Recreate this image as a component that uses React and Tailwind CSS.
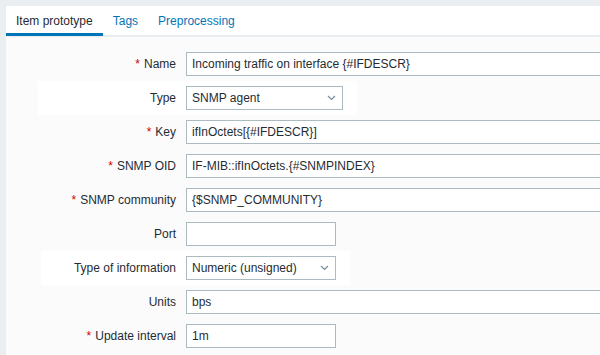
import React from "react";

const font = { fontFamily: '"Liberation Sans", Arial, sans-serif' };

function Chevron() {
  return (
    <svg width="9" height="6" viewBox="0 0 9 6" className="shrink-0">
      <path d="M1 1 L4.5 4.5 L8 1" fill="none" stroke="#768d99" strokeWidth="1.2" />
    </svg>
  );
}

function Label({ req, children, w = "w-[170px]" }) {
  return (
    <div className={`${w} shrink-0 text-right text-[12px] text-[#1f2c33] whitespace-nowrap`}>
      {req && <span className="text-[#d40000] mr-[4px]">*</span>}
      {children}
    </div>
  );
}

function TextInput({ value, w }) {
  return (
    <div className={`${w} shrink-0 h-[24px] border border-[#acbbc2] bg-white flex items-center px-[5px] text-[12px] text-[#1f2c33] whitespace-nowrap overflow-hidden`}>
      {value}
    </div>
  );
}

function Select({ value, w }) {
  return (
    <div className={`${w} shrink-0 h-[24px] border border-[#acbbc2] bg-white flex items-center justify-between pl-[5px] pr-[6px] text-[12px] text-[#1f2c33] whitespace-nowrap`}>
      <span>{value}</span>
      <Chevron />
    </div>
  );
}

function Row({ req, label, children }) {
  return (
    <div className="h-[34px] flex items-center gap-[10px]">
      <Label req={req}>{label}</Label>
      {children}
    </div>
  );
}

export default function App() {
  return (
    <div className="w-[600px] h-[355px] overflow-hidden bg-[#ebeef0] pl-[6px] pt-[6px]" style={font}>
      <div className="w-[700px] h-[400px] bg-[#fbfbfb]">
        <div className="flex bg-white border-b-2 border-[#ebeef0]">
          <div className="relative h-[29px] px-[10px] flex items-center text-[12px] text-[#1f2c33]">
            Item prototype
            <span className="absolute left-0 right-0 bottom-[-1px] h-[3px] bg-[#0275b8]" />
          </div>
          <div className="h-[29px] px-[10px] flex items-center text-[12px] text-[#0275b8]">Tags</div>
          <div className="h-[29px] px-[10px] flex items-center text-[12px] text-[#0275b8]">Preprocessing</div>
        </div>
        <div className="pt-[10px] flex flex-col">
          <Row req label="Name">
            <TextInput w="w-[453px]" value="Incoming traffic on interface {#IFDESCR}" />
          </Row>
          <div className="h-[34px] flex pl-[32px]">
            <div className="h-[34px] bg-white flex items-center gap-[10px] pr-[14px]">
              <Label w="w-[138px]">Type</Label>
              <Select w="w-[157px]" value="SNMP agent" />
            </div>
          </div>
          <Row req label="Key">
            <TextInput w="w-[453px]" value="ifInOctets[{#IFDESCR}]" />
          </Row>
          <Row req label="SNMP OID">
            <TextInput w="w-[453px]" value="IF-MIB::ifInOctets.{#SNMPINDEX}" />
          </Row>
          <Row req label="SNMP community">
            <TextInput w="w-[453px]" value="{$SNMP_COMMUNITY}" />
          </Row>
          <Row label="Port">
            <TextInput w="w-[150px]" value="" />
          </Row>
          <div className="h-[34px] flex pl-[35px]">
            <div className="h-[34px] bg-white flex items-center gap-[10px] pr-[14px]">
              <Label w="w-[135px]">Type of information</Label>
              <Select w="w-[150px]" value="Numeric (unsigned)" />
            </div>
          </div>
          <Row label="Units">
            <TextInput w="w-[453px]" value="bps" />
          </Row>
          <Row req label="Update interval">
            <TextInput w="w-[150px]" value="1m" />
          </Row>
        </div>
      </div>
    </div>
  );
}
